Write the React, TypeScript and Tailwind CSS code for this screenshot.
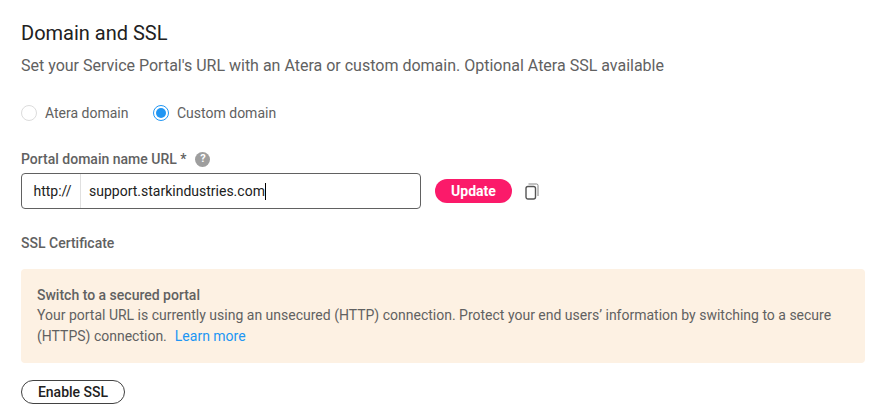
export default function App() {
  return (
    <div className="w-[881px] h-[420px] bg-white overflow-hidden px-[21px] pt-[21px] text-[#616161] font-['Roboto',sans-serif]">
      <h1 className="text-[20px] leading-6 text-[#212121]">Domain and SSL</h1>
      <p className="mt-[10px] text-[16px] leading-[22px]">
        Set your Service Portal's URL with an Atera or custom domain. Optional Atera SSL available
      </p>

      <div className="mt-[26px] flex items-center text-[14px] leading-5 text-[#616161]">
        <span className="w-4 h-4 rounded-full border border-[#dcdcdc]" />
        <span className="ml-2">Atera domain</span>
        <span className="ml-[24px] w-4 h-4 rounded-full border border-[#2196f3] flex items-center justify-center">
          <span className="w-[10px] h-[10px] rounded-full bg-[#2196f3]" />
        </span>
        <span className="ml-[8.5px]">Custom domain</span>
      </div>

      <div className="mt-[26px] flex items-center gap-[9px]">
        <span className="text-[14px] leading-5 font-medium">Portal domain name URL *</span>
        <span className="w-[15px] h-[15px] rounded-full bg-[#9e9e9e] text-white text-[11px] font-bold flex items-center justify-center">?</span>
      </div>

      <div className="mt-[4px] flex items-center">
        <div className="w-[400px] h-[36px] border border-[#616161] rounded flex items-center text-[14px] text-[#212121]">
          <span className="w-[59px] h-full border-r border-[#e0e0e0] flex items-center justify-center pl-[3px]">http://</span>
          <span className="pl-2">support.starkindustries.com</span>
          <span className="w-px h-[17px] bg-black" />
        </div>
        <button className="ml-[14px] w-[77px] h-[24px] rounded-full bg-[#fb1a6a] text-white text-[14px] font-bold flex items-center justify-center">Update</button>
        <svg className="ml-[13px] w-[14px] h-[17px]" viewBox="0 0 14 17" fill="none" stroke="#555555">
          <rect x="1" y="3.5" width="9.5" height="12.5" rx="2" strokeWidth="1.4" />
          <path d="M3.5 1h8a1.5 1.5 0 0 1 1.5 1.5V13" strokeWidth="0.9" stroke="#777777" />
        </svg>
      </div>

      <div className="mt-[24px] text-[14px] leading-5 font-medium">SSL Certificate</div>

      <div className="mt-[16px] w-[844px] h-[94px] bg-[#fdf1e3] rounded px-4 pt-4 text-[14px] leading-[20px]">
        <div className="font-medium">Switch to a secured portal</div>
        <div>Your portal URL is currently using an unsecured (HTTP) connection. Protect your end users’ information by switching to a secure</div>
        <div className="flex gap-2 mt-px">
          <span>(HTTPS) connection.</span>
          <a className="text-[#2196f3]">Learn more</a>
        </div>
      </div>

      <button className="mt-[17px] w-[104px] h-[24px] rounded-full border border-[#424242] text-[14px] font-medium text-[#212121] flex items-center justify-center">Enable SSL</button>
    </div>
  );
}
